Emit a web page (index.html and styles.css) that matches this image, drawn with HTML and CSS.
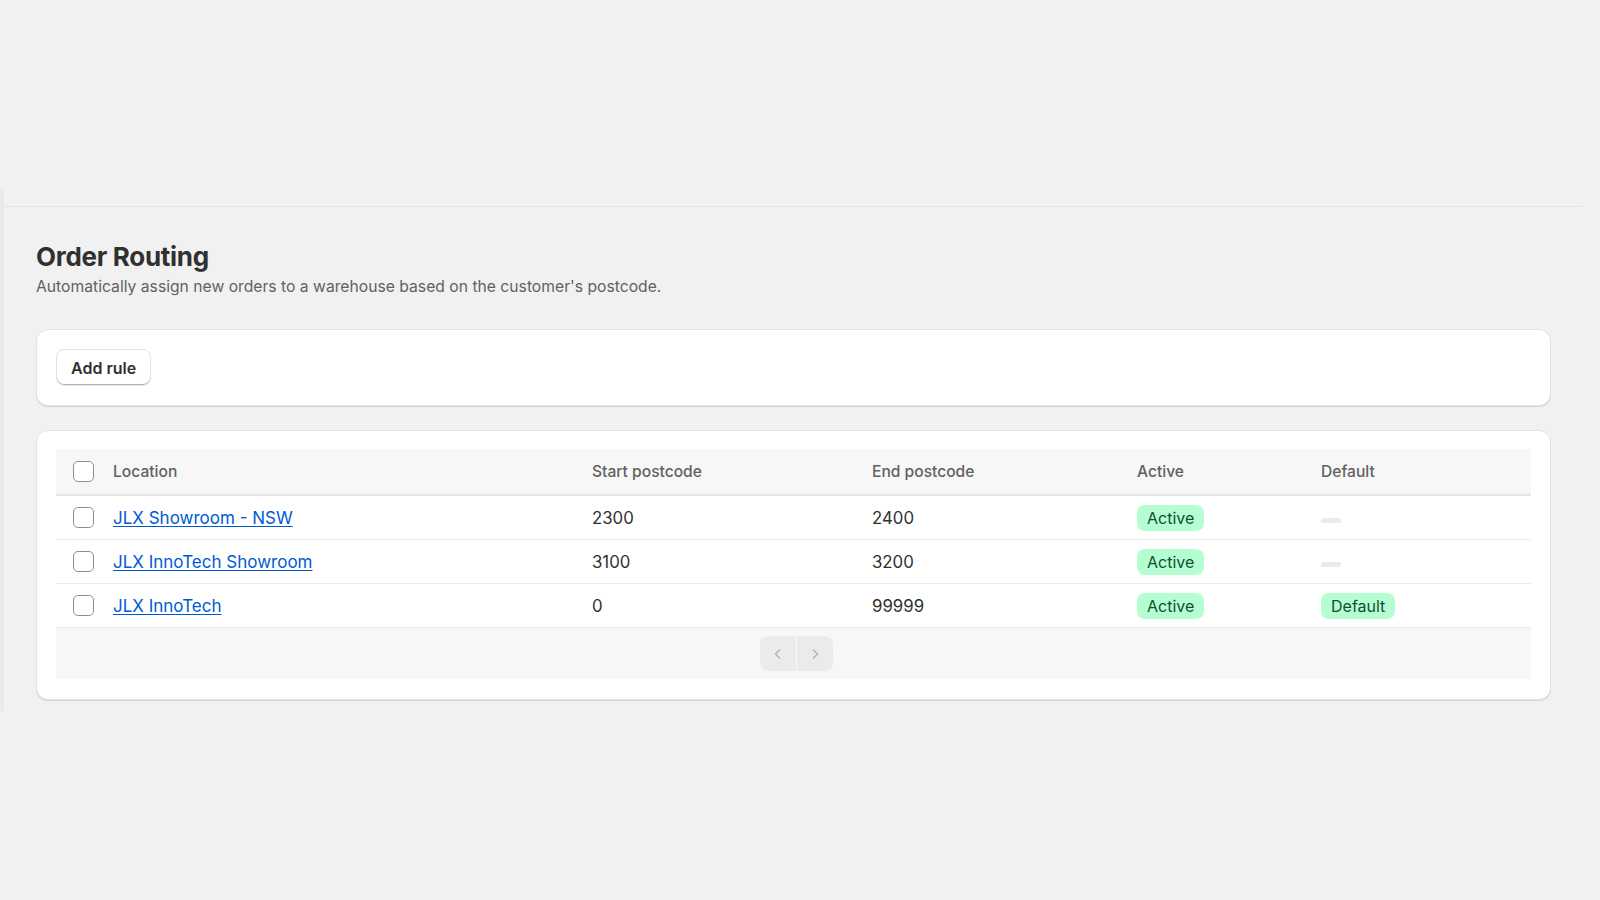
FILE: index.html
```html
<!DOCTYPE html>
<html lang="en">
<head>
<meta charset="utf-8">
<title>Order Routing</title>
<link rel="stylesheet" href="styles.css">
</head>
<body>
<div class="top"></div>
<div class="frame">
  <div class="frame-bar"></div>
  <main class="page">
    <h1 class="title">Order Routing</h1>
    <p class="subtitle">Automatically assign new orders to a warehouse based on the customer's postcode.</p>

    <section class="card card-actions">
      <button class="btn" type="button">Add rule</button>
    </section>

    <section class="card card-table">
      <div class="table">
        <div class="row head">
          <div class="cell check"><span class="checkbox"></span></div>
          <div class="cell">Location</div>
          <div class="cell">Start postcode</div>
          <div class="cell">End postcode</div>
          <div class="cell">Active</div>
          <div class="cell">Default</div>
        </div>
        <div class="row">
          <div class="cell check"><span class="checkbox"></span></div>
          <div class="cell"><a class="link" href="#">JLX Showroom - NSW</a></div>
          <div class="cell">2300</div>
          <div class="cell">2400</div>
          <div class="cell"><span class="badge">Active</span></div>
          <div class="cell"><span class="dash"></span></div>
        </div>
        <div class="row">
          <div class="cell check"><span class="checkbox"></span></div>
          <div class="cell"><a class="link" href="#">JLX InnoTech Showroom</a></div>
          <div class="cell">3100</div>
          <div class="cell">3200</div>
          <div class="cell"><span class="badge">Active</span></div>
          <div class="cell"><span class="dash"></span></div>
        </div>
        <div class="row">
          <div class="cell check"><span class="checkbox"></span></div>
          <div class="cell"><a class="link" href="#">JLX InnoTech</a></div>
          <div class="cell">0</div>
          <div class="cell">99999</div>
          <div class="cell"><span class="badge">Active</span></div>
          <div class="cell"><span class="badge">Default</span></div>
        </div>
        <div class="footer">
          <div class="pager">
            <button class="pager-btn" type="button" aria-label="Previous">
              <svg width="16" height="16" viewBox="0 0 16 16"><path d="M9.5 4 L5.5 8 L9.5 12" fill="none" stroke="currentColor" stroke-width="1.5" stroke-linecap="round" stroke-linejoin="round"/></svg>
            </button>
            <button class="pager-btn" type="button" aria-label="Next">
              <svg width="16" height="16" viewBox="0 0 16 16"><path d="M6.5 4 L10.5 8 L6.5 12" fill="none" stroke="currentColor" stroke-width="1.5" stroke-linecap="round" stroke-linejoin="round"/></svg>
            </button>
          </div>
        </div>
      </div>
    </section>
  </main>
</div>
</body>
</html>
```

FILE: styles.css
```css
* { box-sizing: border-box; }

html, body {
  margin: 0;
  padding: 0;
}

body {
  background: #f1f1f1;
  font-family: Inter, "Noto Sans", "Liberation Sans", sans-serif;
  color: #303030;
  height: 900px;
  overflow: hidden;
}

.top {
  height: 189px;
  background: #f1f2f4;
}

.frame {
  height: 522px;
  border-left: 4px solid #e9e9ea;
}

.frame-bar {
  height: 18px;
  background: #f1f2f4;
  border-bottom: 1px solid #e6e6e6;
  margin-right: 17px;
}

.page {
  padding: 33px 49px 0 32px;
}

.title {
  margin: 0;
  font-size: 26px;
  line-height: 34px;
  font-weight: 700;
  color: #303030;
  letter-spacing: -0.3px;
}

.subtitle {
  margin: 1px 0 0;
  font-size: 15.7px;
  line-height: 24px;
  color: #616161;
}

.card {
  background: #ffffff;
  border: 1px solid #e3e3e3;
  border-radius: 12px;
  box-shadow: 0 1px 0 #d4d4d4;
}

.card-actions {
  margin-top: 30px;
  padding: 19px;
}

.btn {
  height: 37px;
  padding: 0 14px;
  background: #ffffff;
  border: 1px solid #e3e3e3;
  border-radius: 8px;
  box-shadow: inset 0 -1px 0 #b5b5b5;
  font-family: inherit;
  font-size: 16px;
  font-weight: 600;
  color: #303030;
}

.card-table {
  margin-top: 24px;
  padding: 18px 19px 20px;
}

.row {
  display: grid;
  grid-template-columns: 57px 479px 280px 265px 184px 1fr;
  align-items: center;
  height: 44px;
  border-bottom: 1px solid #ebebeb;
  font-size: 16.8px;
}

.row.head {
  height: 47px;
  background: #f7f7f7;
  border-bottom: 2px solid #e6e6e6;
  color: #616161;
  font-size: 15.6px;
  font-weight: 500;
}

.cell {
  display: flex;
  align-items: center;
}

.cell.check {
  padding-left: 17px;
}

.checkbox {
  width: 21px;
  height: 21px;
  border: 1px solid #8e8e8e;
  border-radius: 5px;
  background: #fff;
}

.link {
  color: #005bd3;
  font-size: 17px;
  text-decoration: underline;
  text-underline-offset: 2px;
}

.badge {
  display: inline-flex;
  align-items: center;
  height: 26px;
  padding: 0 10px;
  border-radius: 8px;
  background: #b4fed2;
  color: #0c5132;
  font-size: 16px;
}

.dash {
  width: 20px;
  height: 5px;
  margin-top: 6px;
  border-radius: 3px;
  background: #ebebeb;
}

.footer {
  height: 51px;
  background: #f7f7f7;
  display: flex;
  align-items: center;
  justify-content: center;
}

.pager {
  display: flex;
  gap: 1px;
  margin-left: 5px;
}

.pager-btn {
  width: 36px;
  height: 35px;
  border: none;
  background: #ebebeb;
  color: #b5b5b5;
  display: flex;
  align-items: center;
  justify-content: center;
  padding: 0;
}

.pager-btn:first-child {
  border-radius: 8px 0 0 8px;
}

.pager-btn:last-child {
  border-radius: 0 8px 8px 0;
}
```
